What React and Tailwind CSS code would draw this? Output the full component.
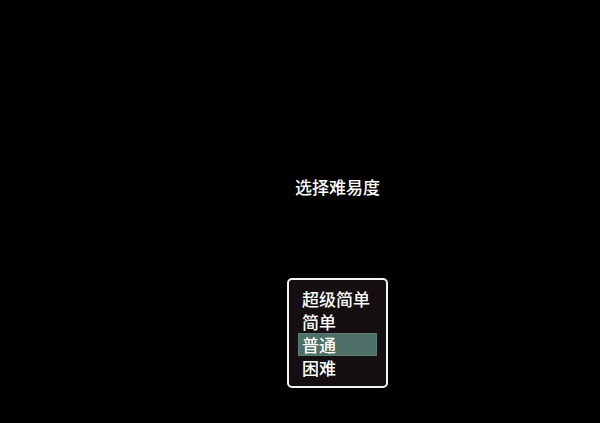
export default function App() {
  const options = ["超级简单", "简单", "普通", "困难"];
  const selected = 2;

  return (
    <div
      className="w-[600px] h-[423px] bg-black text-white overflow-hidden"
      style={{ fontFamily: '"Noto Sans CJK SC", "Noto Sans", sans-serif' }}
    >
      <div className="ml-[287px] pt-[175px] w-[101px] flex flex-col items-center">
        <div className="text-[17px] leading-[23px] font-medium">选择难易度</div>

        <div className="mt-[80px] w-full border-2 border-[#f4f4f4] rounded-[5px] bg-[#150f12] px-[9px] py-[7px]">
          {options.map((opt, i) => (
            <div
              key={opt}
              className={
                i === selected
                  ? "h-[23px] pl-[4px] text-[17px] leading-[23px] font-medium bg-[#4e6f67] shadow-[inset_0_0_0_1px_#5e7d75]"
                  : "h-[23px] pl-[4px] text-[17px] leading-[23px] font-medium"
              }
            >
              {opt}
            </div>
          ))}
        </div>
      </div>
    </div>
  );
}
